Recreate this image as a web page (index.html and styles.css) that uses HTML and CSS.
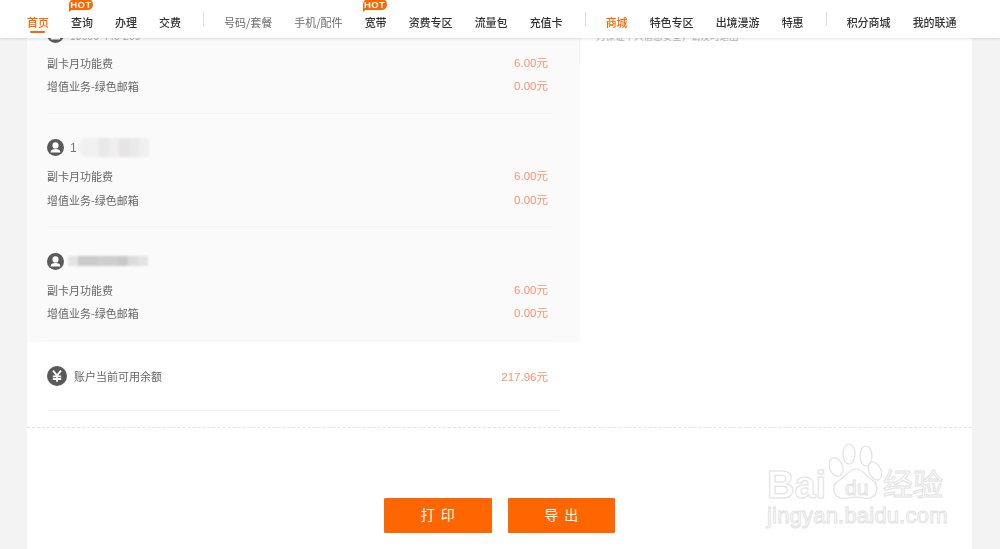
FILE: index.html
```html
<!DOCTYPE html>
<html lang="zh-CN">
<head>
<meta charset="utf-8">
<title>账单详情</title>
<link rel="stylesheet" href="styles.css">
</head>
<body>
<header class="topbar">
  <nav class="nav">
    <a class="nav-item active">首页</a>
    <a class="nav-item">查询<span class="hot">HOT</span></a>
    <a class="nav-item">办理</a>
    <a class="nav-item">交费</a>
    <i class="sep"></i>
    <a class="nav-item light">号码/套餐</a>
    <a class="nav-item light">手机/配件</a>
    <a class="nav-item">宽带<span class="hot">HOT</span></a>
    <a class="nav-item">资费专区</a>
    <a class="nav-item">流量包</a>
    <a class="nav-item">充值卡</a>
    <i class="sep"></i>
    <a class="nav-item mall">商城</a>
    <a class="nav-item">特色专区</a>
    <a class="nav-item">出境漫游</a>
    <a class="nav-item">特惠</a>
    <i class="sep"></i>
    <a class="nav-item">积分商城</a>
    <a class="nav-item">我的联通</a>
  </nav>
</header>

<main class="card">
  <div class="columns">
    <section class="panel">
      <div class="group">
        <div class="group-head">
          <svg class="user-icon" viewBox="0 0 16 16"><circle cx="8" cy="8" r="8" fill="#5a5a5a"/><circle cx="8" cy="6" r="2.9" fill="#fff"/><path d="M3.4 12.6c0-2.3 2-3.2 4.6-3.2s4.6.9 4.6 3.2z" fill="#fff"/></svg>
          <span class="phone muted">18600 440 200</span>
        </div>
        <div class="row"><span>副卡月功能费</span><span class="amount">6.00元</span></div>
        <div class="row"><span>增值业务-绿色邮箱</span><span class="amount">0.00元</span></div>
      </div>
      <div class="group">
        <div class="group-head">
          <svg class="user-icon" viewBox="0 0 16 16"><circle cx="8" cy="8" r="8" fill="#5a5a5a"/><circle cx="8" cy="6" r="2.9" fill="#fff"/><path d="M3.4 12.6c0-2.3 2-3.2 4.6-3.2s4.6.9 4.6 3.2z" fill="#fff"/></svg>
          <span class="phone">1</span>
          <span class="mask mask-a"></span>
        </div>
        <div class="row"><span>副卡月功能费</span><span class="amount">6.00元</span></div>
        <div class="row"><span>增值业务-绿色邮箱</span><span class="amount">0.00元</span></div>
      </div>
      <div class="group">
        <div class="group-head">
          <svg class="user-icon" viewBox="0 0 16 16"><circle cx="8" cy="8" r="8" fill="#5a5a5a"/><circle cx="8" cy="6" r="2.9" fill="#fff"/><path d="M3.4 12.6c0-2.3 2-3.2 4.6-3.2s4.6.9 4.6 3.2z" fill="#fff"/></svg>
          <span class="mask mask-b"></span>
        </div>
        <div class="row"><span>副卡月功能费</span><span class="amount">6.00元</span></div>
        <div class="row"><span>增值业务-绿色邮箱</span><span class="amount">0.00元</span></div>
      </div>
    </section>
    <aside class="side">
      <p class="side-note">为保证个人信息安全，请及时退出</p>
    </aside>
  </div>

  <section class="balance">
    <svg class="yen-icon" viewBox="0 0 20 20"><circle cx="10" cy="10" r="10" fill="#5a5a5a"/><path d="M6 4.6l4 5 4-5M5.8 10.4h8.4M5.8 13h8.4M10 9.6v6.2" fill="none" stroke="#fff" stroke-width="1.9"/></svg>
    <span class="balance-label">账户当前可用余额</span>
    <span class="amount">217.96元</span>
  </section>

  <div class="actions">
    <button class="btn btn-print" type="button">打印</button>
    <button class="btn btn-export" type="button">导出</button>
  </div>
</main>

<div class="watermark">
  <svg class="paw" viewBox="0 0 60 66">
    <g fill="#fff" stroke="#e2e2e2" stroke-width="1.2">
      <ellipse cx="7" cy="25" rx="6.5" ry="9.5" transform="rotate(-22 7 25)"/>
      <ellipse cx="20" cy="12" rx="6" ry="10"/>
      <ellipse cx="37" cy="14" rx="6" ry="10"/>
      <ellipse cx="46" cy="29" rx="6" ry="9.5" transform="rotate(-25 46 29)"/>
      <path d="M27 27c7 0 9 6 15 10 6 4 7 9 5 14-2 5-8 6-13 5-4-1-10-1-14 0-6 1-13 0-15-6-2-6 2-10 7-13 6-3 8-10 15-10z"/>
    </g>
  </svg>
  <span class="wm-bai">Bai</span>
  <span class="wm-du">du</span>
  <span class="wm-cn">经验</span>
  <span class="wm-url">jingyan.baidu.com</span>
</div>
</body>
</html>
```
FILE: styles.css
```css
* { box-sizing: border-box; }
html, body { margin: 0; height: 549px; overflow: hidden; }
body {
  background: #f3f3f3;
  font-family: "Noto Sans CJK SC", "Liberation Sans", sans-serif;
  font-size: 11px;
  color: #666;
  padding: 0 28px 0 27px;
}

.topbar {
  position: fixed;
  top: 0; left: 0; right: 0;
  height: 38px;
  background: #fff;
  box-shadow: 0 1px 3px rgba(0,0,0,.12);
  z-index: 10;
}
.nav { display: flex; align-items: center; gap: 22px; height: 37px; padding: 6px 0 0 27px; filter: blur(.3px); }
.nav-item { position: relative; color: #333; font-weight: 500; line-height: 14px; white-space: nowrap; }
.nav-item.light { color: #6e6e6e; font-weight: 400; }
.nav-item.active, .nav-item.mall { color: #ff6600; }
.nav-item.active::after {
  content: "";
  position: absolute;
  left: 3px; right: 4px; bottom: -4px;
  height: 2px;
  background: #ff6600;
  border-radius: 1px;
}
.sep { width: 1px; height: 14px; background: #ddd; margin: -6px -2px 0 0; flex: none; }
.hot {
  position: absolute;
  left: -2px; top: -16px;
  width: 24px; height: 11px;
  background: #ff6600;
  color: #fff;
  font: bold 9.5px/11px "Liberation Sans", sans-serif;
  text-align: center;
  letter-spacing: .4px;
  border-radius: 6px 6px 6px 0;
}
.hot::after {
  content: "";
  position: absolute;
  left: 0; top: 9px;
  border-top: 4px solid #ff6600;
  border-right: 5px solid transparent;
}

.card { background: #fff; height: 549px; }
.columns { display: flex; height: 342px; }
.panel { width: 553px; background: #fafafa; padding: 0 28px 0 20px; flex: none; filter: blur(.25px); }
.group { height: 113.6px; padding-top: 25px; border-bottom: 1px solid #f3f3f3; }
.group-head { display: flex; align-items: center; height: 18px; margin-bottom: 8.5px; }
.user-icon { width: 17px; height: 17px; flex: none; }
.phone { margin-left: 6px; color: #777; font-size: 12px; line-height: 10px; font-family: "Liberation Sans", sans-serif; }
.phone.muted { align-self: flex-start; margin-top: 6px; color: #aaa; font-size: 10px; line-height: 12px; letter-spacing: .3px; }
.mask { display: block; filter: blur(.8px); }
.mask-a {
  width: 70px; height: 19px; margin-left: 2px;
  border-radius: 8px 0 0 8px;
  background:
    linear-gradient(90deg, #f0f0f0 0 20px, #e8e8e8 20px 30px, #efefef 30px 40px, #e6e4e4 40px 50px, #e9e9e9 50px 60px, #f0f0f0 60px);
}
.mask-b {
  width: 80px; height: 10px; margin-left: 4px;
  background: linear-gradient(90deg, #e4e4e4 0 10px, #cbcaca 10px 30px, #cfcece 30px 50px, #c9c9c9 50px 60px, #dcdcdc 60px 70px, #e3e3e3 70px);
}
.row { display: flex; justify-content: space-between; padding-right: 4px; line-height: 23.5px; color: #666; }
.amount { color: #ff9370; font-family: "Liberation Sans", "Noto Sans CJK SC", sans-serif; font-size: 11.5px; }

.side { flex: 1; position: relative; }
.side::before {
  content: "";
  position: absolute;
  left: -1px; top: 38px;
  height: 24px;
  border-left: 1px dotted #ececec;
}
.side-note {
  margin: 0;
  position: absolute;
  left: 16px; top: 31px;
  font-size: 9.5px; line-height: 10px;
  color: #bbb;
  white-space: nowrap;
}

.balance {
  display: flex;
  align-items: center;
  width: 512px;
  height: 69px;
  margin-left: 20px;
  padding-right: 11px;
  border-bottom: 1px solid #f3f3f3;
  filter: blur(.25px);
}
.yen-icon { width: 20px; height: 20px; flex: none; margin-right: 7px; }
.balance-label { flex: 1; }

.actions {
  display: flex;
  justify-content: center;
  gap: 16px;
  margin-top: 16px;
  padding: 70px 0 0;
  border-top: 1px dashed #e4e4e4;
}
.btn {
  width: 107.5px; height: 35px;
  border: 0;
  border-radius: 1px;
  background: #ff6600;
  color: #fff;
  font: 400 14px/30px "Noto Sans CJK SC", sans-serif;
  letter-spacing: 6px;
  padding: 0 0 3px 6px;
}

.watermark { position: absolute; left: 760px; top: 440px; width: 200px; height: 100px; color: #fff; }
.watermark span { position: absolute; font-family: "Liberation Sans", sans-serif; -webkit-text-stroke: 1px #e2e2e2; color: #fff; line-height: 1; white-space: nowrap; }
.paw { position: absolute; left: 69px; top: 2px; width: 60px; height: 66px; }
.wm-bai { left: 7px; top: 26px; font-size: 38px; font-weight: bold; }
.wm-du { left: 85px; top: 37px; font-size: 21px; }
.watermark .wm-cn { left: 123px; top: 27px; font-size: 30px; font-family: "Noto Sans CJK SC", sans-serif; }
.wm-url { left: 7px; top: 65px; font-size: 22px; letter-spacing: .2px; }
```
